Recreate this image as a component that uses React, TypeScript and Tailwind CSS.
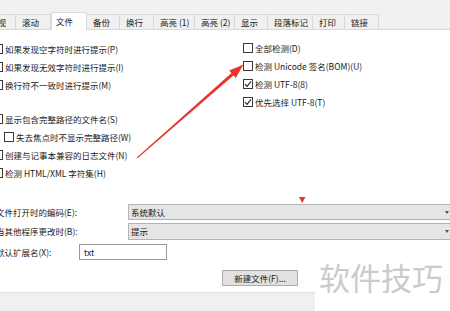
import React from "react";

const Box = ({ checked = false }: { checked?: boolean }) => (
  <span className="w-[10px] h-[10px] border border-[#3a3a3a] bg-white shrink-0 flex items-center justify-center">
    {checked && (
      <svg width="8" height="8" viewBox="0 0 8 8">
        <path d="M1 4.2 L3 6.3 L7 1.4" fill="none" stroke="#222" strokeWidth="1.1" />
      </svg>
    )}
  </span>
);

const Row = ({
  label,
  checked = false,
  className = "",
}: {
  label: string;
  checked?: boolean;
  className?: string;
}) => (
  <div className={"h-[18px] flex items-center gap-[2px] whitespace-nowrap " + className}>
    <Box checked={checked} />
    <span className="leading-none">{label}</span>
  </div>
);

const tabs: { label: string; w: string; active?: boolean }[] = [
  { label: "滚动", w: "w-[35px]" },
  { label: "文件", w: "w-[36px]", active: true },
  { label: "备份", w: "w-[33px]" },
  { label: "换行", w: "w-[34px]" },
  { label: "高亮 (1)", w: "w-[41px]" },
  { label: "高亮 (2)", w: "w-[40px]" },
  { label: "显示", w: "w-[33px]" },
  { label: "段落标记", w: "w-[45px]" },
  { label: "打印", w: "w-[32px]" },
  { label: "链接", w: "w-[34px]" },
];

export default function App() {
  return (
    <div className="w-[450px] h-[311px] relative overflow-hidden bg-white flex flex-col text-[8.5px] text-[#1a1a1a] font-['Noto_Sans_CJK_SC','Noto_Sans',sans-serif]">
      {/* top strip */}
      <div className="h-[12px] bg-[#f1f1f1] shrink-0" />
      {/* tab row */}
      <div className="h-[18px] shrink-0 flex items-end bg-[#f1f1f1] border-b border-[#d9d9d9]">
        <div className="w-[16px] h-[15px] flex items-center justify-end pr-[9px] border-r border-t border-[#d9d9d9] bg-[#f0f0f0] leading-none whitespace-nowrap">
          视
        </div>
        {tabs.map((t) =>
          t.active ? (
            <div
              key={t.label}
              className={t.w + " h-[18px] -mb-px relative z-10 bg-white border-x border-t border-[#d9d9d9] flex items-center pl-[4px] pb-[1px] leading-none whitespace-nowrap"}
            >
              {t.label}
            </div>
          ) : (
            <div
              key={t.label}
              className={t.w + " h-[15px] bg-[#f0f0f0] border-r border-t border-[#d9d9d9] flex items-center pl-[6px] leading-none whitespace-nowrap"}
            >
              {t.label}
            </div>
          )
        )}
      </div>

      {/* content */}
      <div className="h-[262px] shrink-0 bg-white flex flex-col pt-[9px]">
        <div className="flex">
          <div className="w-[243px] shrink-0 flex flex-col">
            <div className="flex flex-col -ml-[7px] mt-[1px]">
              <Row label="如果发现空字符时进行提示(P)" />
              <Row label="如果发现无效字符时进行提示(I)" />
              <Row label="换行符不一致时进行提示(M)" />
            </div>
            <div className="flex flex-col mt-[16px]">
              <Row className="-ml-[7px]" label="显示包含完整路径的文件名(S)" />
              <Row className="ml-[4px]" label="失去焦点时不显示完整路径(W)" />
              <Row className="-ml-[7px]" label="创建与记事本兼容的日志文件(N)" />
              <Row className="-ml-[7px]" label="检测 HTML/XML 字符集(H)" />
            </div>
          </div>
          <div className="flex flex-col">
            <Row label="全部检测(D)" />
            <Row label="检测 Unicode 签名(BOM)(U)" />
            <Row label="检测 UTF-8(8)" checked />
            <Row label="优先选择 UTF-8(T)" checked />
          </div>
        </div>

        {/* form */}
        <div className="flex flex-col mt-[22px]">
          <div className="h-[16px] flex items-center">
            <span className="w-[132px] -ml-[4px] shrink-0 leading-none whitespace-nowrap">文件打开时的编码(E):</span>
            <div className="w-[324px] h-[16px] shrink-0 bg-[#e5e5e5] border border-[#b4b4b4] flex items-center pl-[2px] leading-none relative">
              系统默认
              <span className="absolute left-[316px] top-[6px] w-0 h-0 border-l-[2px] border-r-[2px] border-t-[3px] border-l-transparent border-r-transparent border-t-[#555]" />
            </div>
          </div>
          <div className="h-[16px] flex items-center mt-[3px]">
            <span className="w-[132px] -ml-[4px] shrink-0 leading-none whitespace-nowrap">当其他程序更改时(B):</span>
            <div className="w-[324px] h-[17px] shrink-0 bg-[#e5e5e5] border border-[#b4b4b4] flex items-center pl-[2px] leading-none relative">
              提示
              <span className="absolute left-[316px] top-[6px] w-0 h-0 border-l-[2px] border-r-[2px] border-t-[3px] border-l-transparent border-r-transparent border-t-[#555]" />
            </div>
          </div>
          <div className="h-[16px] flex items-center mt-[5px]">
            <span className="w-[83px] -ml-[4px] shrink-0 leading-none whitespace-nowrap">默认扩展名(X):</span>
            <div className="w-[88px] h-[16px] shrink-0 bg-white border border-[#9a9a9a] flex items-center pl-[4px] leading-none">
              txt
            </div>
          </div>
          <div className="mt-[10px] pl-[222px]">
            <div className="w-[76px] h-[16px] bg-[#e1e1e1] border border-[#adadad] flex items-center justify-center leading-none whitespace-nowrap">
              新建文件(F)...
            </div>
          </div>
        </div>
      </div>

      {/* bottom strip */}
      <div className="flex-1 w-[315px] bg-[#f0f0f0] border-t border-[#dfdfdf]" />

      {/* red annotation arrow */}
      <svg className="absolute left-0 top-0 pointer-events-none" width="450" height="311" viewBox="0 0 450 311">
        <polygon points="137.3,158.4 136.7,157.6 231.5,72.9 234,75.1" fill="#e8352d" />
        <polygon points="243.5,64.5 229.2,70.4 235.8,78" fill="#e8352d" />
        <polygon points="299,197 305.5,197 302.2,203" fill="#e8352d" />
      </svg>

      {/* watermark */}
      <div className="absolute left-[319px] top-[261px] text-[31px] leading-none text-[#cbcbcb] whitespace-nowrap bg-white">
        软件技巧
      </div>
    </div>
  );
}
